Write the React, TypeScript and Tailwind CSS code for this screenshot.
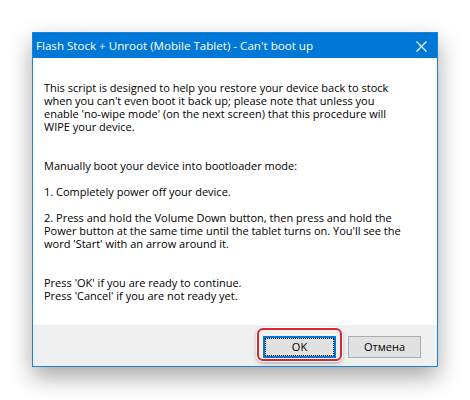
const paragraphs = [
  { text: "This script is designed to help you restore your device back to stock\nwhen you can't even boot it back up; please note that unless you\nenable 'no-wipe mode' (on the next screen) that this procedure will\nWIPE your device.", gap: "mb-[26px]" },
  { text: "Manually boot your device into bootloader mode:", gap: "mb-[13px]" },
  { text: "1. Completely power off your device.", gap: "mb-[13px]" },
  { text: "2. Press and hold the Volume Down button, then press and hold the\nPower button at the same time until the tablet turns on. You'll see the\nword 'Start' with an arrow around it.", gap: "mb-[26px]" },
  { text: "Press 'OK' if you are ready to continue.\nPress 'Cancel' if you are not ready yet.", gap: "" },
];

export default function App() {
  return (
    <div className="w-[470px] h-[400px] bg-white pt-[32px] pl-[32px] font-['Open_Sans',sans-serif]">
      <div className="w-[406px] border border-[#1883d7] shadow-[0_10px_22px_rgba(0,0,0,0.35)]">
        {/* title bar */}
        <div className="h-[25px] bg-[#0078d7] text-white flex items-center justify-between pl-[3px] pr-[10px]">
          <span className="text-[11.6px] leading-none">Flash Stock + Unroot (Mobile Tablet) - Can't boot up</span>
          <svg width="11" height="11" viewBox="0 0 11 11" className="mt-[2px]">
            <path d="M0.5 0.5 L10.5 10.5 M10.5 0.5 L0.5 10.5" stroke="white" strokeWidth="1.1" />
          </svg>
        </div>

        {/* body */}
        <div className="bg-white pt-[23px] pb-[23px] pl-[11px] text-[11px] leading-[13px] text-black">
          {paragraphs.map((p, i) => (
            <p key={i} className={`whitespace-pre ${p.gap}`}>{p.text}</p>
          ))}
        </div>

        {/* footer */}
        <div className="bg-[#f0f0f0] h-[41px] flex items-start justify-end gap-[12px] pt-[11px] pr-[16px] text-[11px]">
          <div className="relative">
            <div className="absolute -left-[6px] -top-[8px] w-[85px] h-[33px] rounded-[6px] border-2 border-[#d8262e] ring-1 ring-white shadow-[0_2px_4px_rgba(0,0,0,0.35)]" />
            <button className="w-[73px] h-[22px] bg-[#e1e1e1] border-2 border-[#0078d7] flex items-center justify-center">
              <span className="w-full h-full border border-dotted border-black flex items-center justify-center">OK</span>
            </button>
          </div>
          <button className="w-[73px] h-[22px] bg-[#e1e1e1] border border-[#adadad] flex items-center justify-center">
            Отмена
          </button>
        </div>
      </div>
    </div>
  );
}
